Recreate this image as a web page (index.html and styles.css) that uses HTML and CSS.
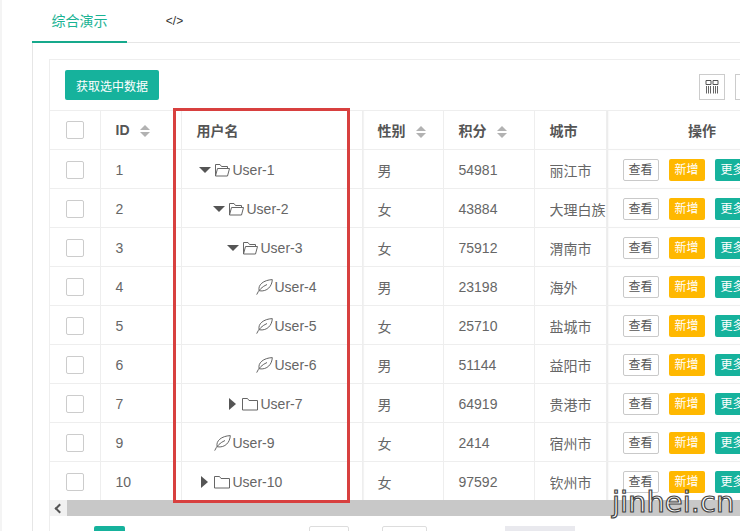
FILE: index.html
```html
<!DOCTYPE html>
<html lang="en">
<head>
    <meta charset="UTF-8">
    <title>综合演示</title>
    <link rel="stylesheet" href="styles.css">
</head>
<body>
    <svg class="icon-defs" width="0" height="0">
        <symbol id="folder-open" viewBox="0 0 16 14"><path d="M1.5 13V1.5H6L7.5 3.5H13.5V5.5M1.5 13L3.5 5.5H15.5L13.5 13Z" fill="none" stroke="currentColor"/></symbol>
        <symbol id="folder" viewBox="0 0 16 14"><path d="M.5 13V1.5H5.5L7 3.5H15.5V13Z" fill="none" stroke="currentColor"/></symbol>
        <symbol id="leaf" viewBox="0 0 17 16"><path d="M.7 15.6C2.5 11 6.5 7.5 11 5.5M3.2 11.8C1.5 6 7.5 1 16.3.6 16 7 11.5 13 3.2 11.8Z" fill="none" stroke="currentColor"/></symbol>
    </svg>

    <div class="page">
        <div class="tabs">
            <div class="tab active">综合演示</div>
            <div class="tab code">&lt;/&gt;</div>
        </div>
        <div class="tab-body">
            <div class="panel">
                <div class="toolbar">
                    <button class="btn-primary">获取选中数据</button>
                    <div class="tools">
                        <span class="tool">
                            <svg width="14" height="14" viewBox="0 0 14 14"><path d="M1 .5H6V4.5H1ZM8 .5H13V4.5H8Z" fill="none" stroke="#555"/><path d="M1.5 6V13.5M3.5 6V13.5M5.5 6V13.5M8.5 6V13.5M10.5 6V13.5M12.5 6V13.5" stroke="#666" fill="none"/></svg>
                        </span>
                        <span class="tool"></span>
                    </div>
                </div>

                <div class="table-wrap">
                    <div class="table-scroll">
                        <table class="grid">
                            <colgroup>
                                <col class="c-check"><col class="c-id"><col class="c-name"><col class="c-sex"><col class="c-score"><col class="c-city"><col class="c-ops">
                            </colgroup>
                            <thead>
                                <tr>
                                    <th><span class="check"></span></th>
                                    <th>ID<span class="sort"></span></th>
                                    <th>用户名</th>
                                    <th>性别<span class="sort"></span></th>
                                    <th>积分<span class="sort"></span></th>
                                    <th>城市</th>
                                    <th class="ops-head">操作</th>
                                </tr>
                            </thead>
                            <tbody id="rows"></tbody>
                        </table>
                    </div>
                    <div class="scrollbar">
                        <span class="scroll-arrow"></span>
                        <span class="scroll-thumb"></span>
                    </div>
                    <div class="highlight"></div>
                </div>

                <div class="pager">
                    <span class="page-num"></span>
                    <span class="page-box size"></span>
                    <span class="page-box jump"></span>
                    <span class="page-grey"></span>
                </div>
            </div>
        </div>
    </div>

    <div class="watermark">jinhei.cn</div>

    <script>
        const rows = [
            [1, 'User-1', 0, 'open', '男', 54981, '丽江市'],
            [2, 'User-2', 1, 'open', '女', 43884, '大理白族自治州'],
            [3, 'User-3', 2, 'open', '女', 75912, '渭南市'],
            [4, 'User-4', 3, 'leaf', '男', 23198, '海外'],
            [5, 'User-5', 3, 'leaf', '女', 25710, '盐城市'],
            [6, 'User-6', 3, 'leaf', '男', 51144, '益阳市'],
            [7, 'User-7', 2, 'closed', '男', 64919, '贵港市'],
            [9, 'User-9', 0, 'leaf', '女', 2414, '宿州市'],
            [10, 'User-10', 0, 'closed', '女', 97592, '钦州市']
        ];

        const icons = { open: 'folder-open', closed: 'folder', leaf: 'leaf' };
        const tbody = document.getElementById('rows');

        rows.forEach(([id, name, depth, type, sex, score, city]) => {
            const arrow = type === 'leaf' ? '' : `<span class="arrow ${type}"></span>`;
            const tr = document.createElement('tr');
            tr.innerHTML = `
                <td><span class="check"></span></td>
                <td>${id}</td>
                <td><div class="tree-cell" style="padding-left: ${depth * 14}px">
                    <span class="arrow-slot">${arrow}</span>
                    <svg class="tree-icon ${type}"><use href="#${icons[type]}"/></svg>
                    <span>${name}</span>
                </div></td>
                <td>${sex}</td>
                <td>${score}</td>
                <td><div class="city">${city}</div></td>
                <td class="ops">
                    <div class="ops-row">
                        <span class="mini plain">查看</span>
                        <span class="mini warm">新增</span>
                        <span class="mini teal">更多</span>
                    </div>
                </td>`;
            tbody.appendChild(tr);
        });
    </script>
</body>
</html>
```

FILE: styles.css
```css
html, body {
    margin: 0;
    height: 531px;
    overflow: hidden;
    background-color: #fff;
}

body {
    font-family: "Liberation Sans", "Noto Sans CJK SC", sans-serif;
    font-size: 14px;
    color: #666;
    position: relative;
}

.icon-defs {
    position: absolute;
}

.page {
    width: 740px;
    height: 531px;
    padding-left: 30px;
    box-sizing: border-box;
    border-left: 2px solid #f4f4f4;
    overflow: hidden;
}

.tabs {
    display: flex;
    height: 43px;
    box-sizing: border-box;
    border-bottom: 1px solid #e6e6e6;
}

.tab {
    line-height: 43px;
    height: 43px;
    box-sizing: border-box;
    text-align: center;
}

.tab.active {
    width: 95px;
    color: #1ab394;
    border-bottom: 2px solid #16a98c;
}

.tab.code {
    width: 95px;
    font-size: 12px;
    color: #333;
}

.tab-body {
    border-left: 1px solid #e6e6e6;
    padding: 16px 0 0 16px;
    height: 472px;
}

.panel {
    border-top: 1px solid #eee;
    border-left: 1px solid #eee;
    height: 472px;
}

.toolbar {
    display: flex;
    justify-content: space-between;
    width: 711px;
    padding: 10px 0;
}

.btn-primary {
    margin-left: 15px;
    width: 94px;
    height: 30px;
    border: none;
    border-radius: 2px;
    background-color: #16b29c;
    color: #fff;
    font-family: inherit;
    font-size: 12px;
    padding: 0;
}

.tools {
    display: flex;
    gap: 10px;
    padding-top: 4px;
}

.tool {
    width: 26px;
    height: 26px;
    box-sizing: border-box;
    border: 1px solid #ccc;
    display: flex;
    align-items: center;
    justify-content: center;
}

.table-wrap {
    position: relative;
    border-top: 1px solid #eee;
    width: 711px;
}

.table-scroll {
    height: 389px;
    overflow: hidden;
}

.grid {
    border-collapse: collapse;
    table-layout: fixed;
    width: 748px;
    margin-top: -1px;
}

.c-check { width: 50px; }
.c-id { width: 81px; }
.c-name { width: 181px; }
.c-sex { width: 81px; }
.c-score { width: 91px; }
.c-city { width: 72px; }
.c-ops { width: 192px; }

.grid th,
.grid td {
    height: 39px;
    border-right: 1px solid #eee;
    border-bottom: 1px solid #eee;
    text-align: left;
    white-space: nowrap;
    overflow: hidden;
    box-sizing: border-box;
}

.grid td {
    padding: 2px 15px 0;
}

.grid th {
    padding: 1px 15px 0;
    color: #555;
    font-size: 14px;
    font-weight: bold;
}

.grid th:first-child {
    text-align: center;
    padding: 1px 0 0;
}

.grid td:first-child {
    text-align: center;
    padding: 2px 0 0;
}

.grid th:nth-child(4),
.grid td:nth-child(4) {
    box-shadow: inset 2px 0 1px -1px #f2f2f2;
}

.check {
    display: inline-block;
    width: 18px;
    height: 18px;
    box-sizing: border-box;
    border: 1px solid #ccc;
    border-radius: 2px;
    vertical-align: middle;
}

.sort {
    display: inline-block;
    margin-left: 10px;
    vertical-align: middle;
    width: 0;
    height: 0;
    border-left: 5px solid transparent;
    border-right: 5px solid transparent;
    border-bottom: 5px solid #b2b2b2;
    position: relative;
    top: -4px;
}

.sort::after {
    content: "";
    position: absolute;
    left: -5px;
    top: 7px;
    border-left: 5px solid transparent;
    border-right: 5px solid transparent;
    border-top: 5px solid #b2b2b2;
}

.tree-cell {
    display: flex;
    align-items: center;
    margin-left: 2px;
}

.arrow-slot {
    width: 15px;
    flex: none;
    display: flex;
    align-items: center;
}

.arrow {
    width: 0;
    height: 0;
}

.arrow.open {
    border-left: 6px solid transparent;
    border-right: 6px solid transparent;
    border-top: 6px solid #555;
}

.arrow.closed {
    border-top: 6px solid transparent;
    border-bottom: 6px solid transparent;
    border-left: 7px solid #555;
    margin-left: 2px;
}

.tree-icon {
    width: 16px;
    height: 14px;
    flex: none;
    margin-right: 3px;
    color: #666;
}

.tree-icon.leaf {
    width: 17px;
    height: 16px;
    margin-right: 2px;
}

.city {
    width: 57px;
    overflow: hidden;
}

.grid .ops-head {
    text-align: center;
    box-shadow: inset 2px 0 2px -1px #e6e6e6;
}

.grid td.ops {
    padding: 2px 0 0 16px;
    box-shadow: inset 2px 0 2px -1px #e6e6e6;
}

.ops-row {
    display: flex;
    gap: 10px;
}

.mini {
    width: 36px;
    height: 22px;
    line-height: 20px;
    box-sizing: border-box;
    border: 1px solid transparent;
    border-radius: 2px;
    font-size: 12px;
    text-align: center;
    color: #fff;
    flex: none;
}

.mini.plain {
    background-color: #fff;
    border-color: #c9c9c9;
    color: #555;
}

.mini.warm { background-color: #ffb800; }
.mini.teal { background-color: #16b29c; }

.scrollbar {
    height: 16px;
    display: flex;
    background-color: #f1f1f1;
}

.scroll-arrow {
    width: 17px;
    position: relative;
}

.scroll-arrow::after {
    content: "";
    position: absolute;
    left: 6px;
    top: 5px;
    width: 5px;
    height: 5px;
    border-left: 2px solid #555;
    border-bottom: 2px solid #555;
    transform: rotate(45deg);
}

.scroll-thumb {
    flex: 1;
    background-color: #c8c8c8;
}

.highlight {
    position: absolute;
    left: 123px;
    top: -3px;
    width: 177px;
    height: 395px;
    box-sizing: border-box;
    border: 3px solid #d8403f;
}

.pager {
    display: flex;
    height: 30px;
    padding: 10px 0 0 44px;
}

.page-num {
    width: 31px;
    height: 30px;
    background-color: #16b29c;
    border-radius: 2px;
}

.page-box {
    height: 30px;
    border: 1px solid #ddd;
    box-sizing: border-box;
    border-radius: 2px;
}

.page-box.size {
    width: 40px;
    margin-left: 184px;
}

.page-box.jump {
    width: 45px;
    margin-left: 33px;
}

.page-grey {
    width: 70px;
    height: 30px;
    margin-left: 78px;
    background-color: #e9e9ee;
}

.watermark {
    position: absolute;
    left: 612px;
    top: 485px;
    font-family: "DejaVu Sans", sans-serif;
    font-size: 29px;
    color: #fff;
    -webkit-text-stroke: 1.2px #444;
}
```
